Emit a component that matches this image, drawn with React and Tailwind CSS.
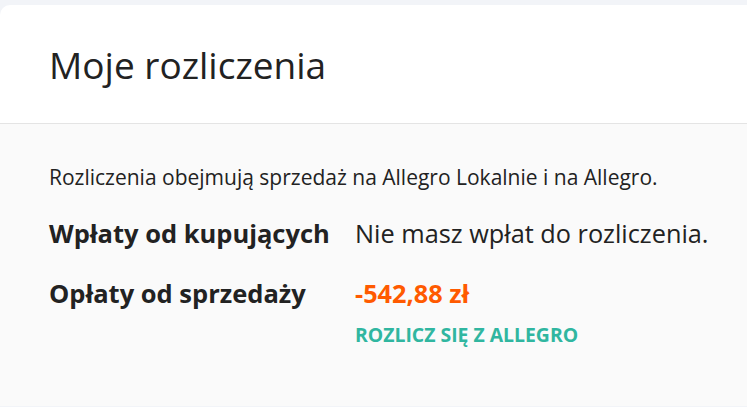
export default function App() {
  return (
    <div className="min-h-[407px] bg-[#f2f4f8] pt-[5px] font-['Open_Sans',sans-serif] text-[#222222]">
      <div className="rounded-tl-[10px] bg-white">
        <div className="flex h-[119px] items-center border-b border-[#e4e4e4] pl-[49px]">
          <h1 className="text-[37px] font-normal leading-none">Moje rozliczenia</h1>
        </div>
        <div className="min-h-[282px] bg-[#fafafa] pl-[49px] pt-[39px]">
          <p className="text-[21px] leading-[28px]">
            Rozliczenia obejmują sprzedaż na Allegro Lokalnie i na Allegro.
          </p>
          <div className="mt-[26px] grid grid-cols-[306px_1fr] items-center">
            <div className="text-[25.5px] font-bold leading-[32px]">Wpłaty od kupujących</div>
            <div className="text-[25.3px] leading-[32px]">Nie masz wpłat do rozliczenia.</div>
          </div>
          <div className="mt-[28px] grid grid-cols-[306px_1fr]">
            <div className="text-[25.5px] font-bold leading-[32px]">Opłaty od sprzedaży</div>
            <div>
              <div className="text-[25.3px] font-bold leading-[32px] text-[#ff5a00]">-542,88 zł</div>
              <a href="#" className="mt-[14px] block text-[19.4px] font-bold uppercase leading-[24px] text-[#30b6a0]">
                Rozlicz się z Allegro
              </a>
            </div>
          </div>
        </div>
      </div>
    </div>
  )
}
